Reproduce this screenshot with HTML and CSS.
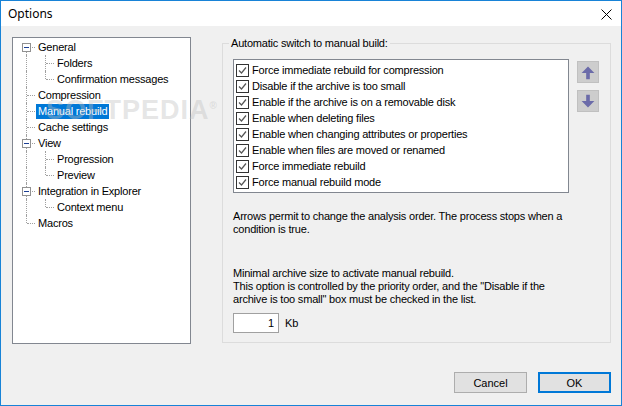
FILE: index.html
```html
<!DOCTYPE html>
<html lang="en">
<head>
    <meta charset="UTF-8">
    <title>Options</title>
    <link rel="stylesheet" href="styles.css">
</head>
<body>
    <div class="window">
        <div class="titlebar">
            <span class="title">Options</span>
            <svg class="close" width="11" height="11" viewBox="0 0 11 11">
                <path d="M0.5 0.5 L10.5 10.5 M10.5 0.5 L0.5 10.5" stroke="#000" stroke-width="1"/>
            </svg>
        </div>
        <div class="client">
            <div class="main">
                <div class="tree">
                    <div class="row"><span class="cell first"><span class="toggle"></span></span><span class="label">General</span></div>
                    <div class="row"><span class="cell pipe"></span><span class="cell tee"></span><span class="label">Folders</span></div>
                    <div class="row"><span class="cell pipe"></span><span class="cell end"></span><span class="label">Confirmation messages</span></div>
                    <div class="row"><span class="cell tee"></span><span class="label">Compression</span></div>
                    <div class="row"><span class="cell tee"></span><span class="label selected">Manual rebuild</span></div>
                    <div class="row"><span class="cell tee"></span><span class="label">Cache settings</span></div>
                    <div class="row"><span class="cell tee"><span class="toggle"></span></span><span class="label">View</span></div>
                    <div class="row"><span class="cell pipe"></span><span class="cell tee"></span><span class="label">Progression</span></div>
                    <div class="row"><span class="cell pipe"></span><span class="cell end"></span><span class="label">Preview</span></div>
                    <div class="row"><span class="cell tee"><span class="toggle"></span></span><span class="label">Integration in Explorer</span></div>
                    <div class="row"><span class="cell pipe"></span><span class="cell end"></span><span class="label">Context menu</span></div>
                    <div class="row"><span class="cell end"></span><span class="label">Macros</span></div>
                </div>

                <fieldset class="group">
                    <legend>Automatic switch to manual build:</legend>
                    <div class="group-body">
                        <div class="list-area">
                            <div class="checklist">
                                <div class="check-row"><span class="box"><svg width="11" height="11" viewBox="0 0 11 11"><path d="M2 5.5 L4.5 8 L9 2.5" fill="none" stroke="#555" stroke-width="1.2"/></svg></span>Force immediate rebuild for compression</div>
                                <div class="check-row"><span class="box"><svg width="11" height="11" viewBox="0 0 11 11"><path d="M2 5.5 L4.5 8 L9 2.5" fill="none" stroke="#555" stroke-width="1.2"/></svg></span>Disable if the archive is too small</div>
                                <div class="check-row"><span class="box"><svg width="11" height="11" viewBox="0 0 11 11"><path d="M2 5.5 L4.5 8 L9 2.5" fill="none" stroke="#555" stroke-width="1.2"/></svg></span>Enable if the archive is on a removable disk</div>
                                <div class="check-row"><span class="box"><svg width="11" height="11" viewBox="0 0 11 11"><path d="M2 5.5 L4.5 8 L9 2.5" fill="none" stroke="#555" stroke-width="1.2"/></svg></span>Enable when deleting files</div>
                                <div class="check-row"><span class="box"><svg width="11" height="11" viewBox="0 0 11 11"><path d="M2 5.5 L4.5 8 L9 2.5" fill="none" stroke="#555" stroke-width="1.2"/></svg></span>Enable when changing attributes or properties</div>
                                <div class="check-row"><span class="box"><svg width="11" height="11" viewBox="0 0 11 11"><path d="M2 5.5 L4.5 8 L9 2.5" fill="none" stroke="#555" stroke-width="1.2"/></svg></span>Enable when files are moved or renamed</div>
                                <div class="check-row"><span class="box"><svg width="11" height="11" viewBox="0 0 11 11"><path d="M2 5.5 L4.5 8 L9 2.5" fill="none" stroke="#555" stroke-width="1.2"/></svg></span>Force immediate rebuild</div>
                                <div class="check-row"><span class="box"><svg width="11" height="11" viewBox="0 0 11 11"><path d="M2 5.5 L4.5 8 L9 2.5" fill="none" stroke="#555" stroke-width="1.2"/></svg></span>Force manual rebuild mode</div>
                            </div>
                            <div class="order-buttons">
                                <button class="arrow-btn"><svg width="22" height="21" viewBox="0 0 22 21"><polygon points="11,4 18,11 13,11 13,18 9,18 9,11 4,11" fill="#6b6ba9"/></svg></button>
                                <button class="arrow-btn"><svg width="22" height="21" viewBox="0 0 22 21"><polygon points="11,17 18,10 13,10 13,3 9,3 9,10 4,10" fill="#6b6ba9"/></svg></button>
                            </div>
                        </div>
                        <p class="note">Arrows permit to change the analysis order. The process stops when a condition is true.</p>
                        <p class="note second">Minimal archive size to activate manual rebuild.<br>This option is controlled by the priority order, and the "Disable if the archive is too small" box must be checked in the list.</p>
                        <div class="size-row">
                            <input class="size-input" type="text" value="1">
                            <span>Kb</span>
                        </div>
                    </div>
                </fieldset>

                <span class="watermark">SOFTPEDIA<sup>®</sup></span>
            </div>
            <div class="footer">
                <button class="btn">Cancel</button>
                <button class="btn default">OK</button>
            </div>
        </div>
    </div>
</body>
</html>
```

FILE: styles.css
```css
body {
    margin: 0;
    font-family: "Liberation Sans", Arial, sans-serif;
    font-size: 11px;
    letter-spacing: -0.2px;
    color: #000;
}
.window {
    width: 622px;
    height: 406px;
    box-sizing: border-box;
    border: 1px solid #1883d7;
    display: flex;
    flex-direction: column;
    background-color: #f0f0f0;
}
.titlebar {
    height: 25px;
    background-color: #fff;
    display: flex;
    align-items: center;
    justify-content: space-between;
    padding: 0 9px 0 7px;
}
.title {
    font-family: "Noto Sans", "Open Sans", sans-serif;
    font-size: 12px;
    letter-spacing: 0;
}
.close {
    margin-top: 2px;
}
.client {
    flex: 1;
    padding: 11px 10px 0 11px;
    display: flex;
    flex-direction: column;
}
.main {
    display: flex;
    gap: 31px;
    position: relative;
}

/* tree view */
.tree {
    width: 179px;
    height: 307px;
    box-sizing: border-box;
    border: 1px solid #828790;
    background-color: #fff;
    padding: 1px 0 0 4px;
}
.row {
    display: flex;
    height: 16px;
    align-items: center;
}
.cell {
    width: 19px;
    height: 16px;
    flex: none;
    position: relative;
}
.cell::before {
    content: '';
    position: absolute;
    left: 9px;
    top: 0;
    bottom: 0;
    border-left: 1px dotted #a0a0a0;
}
.cell.first::before {
    top: 8px;
}
.cell.end::before {
    bottom: 8px;
}
.cell.tee::after,
.cell.end::after,
.cell.first::after {
    content: '';
    position: absolute;
    left: 10px;
    top: 8px;
    width: 8px;
    border-top: 1px dotted #a0a0a0;
}
.toggle {
    position: absolute;
    left: 5px;
    top: 4px;
    width: 9px;
    height: 9px;
    box-sizing: border-box;
    border: 1px solid #919191;
    background-color: #fff;
    z-index: 1;
}
.toggle::after {
    content: '';
    position: absolute;
    left: 1px;
    top: 3px;
    width: 5px;
    border-top: 1px solid #1c3f94;
}
.label {
    padding: 0 2px;
    line-height: 15px;
    white-space: nowrap;
}
.label.selected {
    background-color: #0078d7;
    color: #fff;
}

/* group box */
.group {
    width: 389px;
    height: 306px;
    box-sizing: border-box;
    margin: 0;
    padding: 0;
    min-width: 0;
    border: 1px solid #dcdcdc;
}
.group legend {
    margin-left: 6px;
    padding: 0 2px;
    line-height: 13px;
}
.group-body {
    padding: 9px 0 0 10px;
}
.list-area {
    display: flex;
    gap: 8px;
}
.checklist {
    width: 336px;
    height: 134px;
    box-sizing: border-box;
    border: 1px solid #828790;
    background-color: #fff;
    padding: 2px 0 0 2px;
}
.check-row {
    display: flex;
    align-items: center;
    height: 16px;
    white-space: nowrap;
}
.box {
    width: 13px;
    height: 13px;
    box-sizing: border-box;
    border: 1px solid #333;
    background-color: #fff;
    margin-right: 3px;
    flex: none;
}
.box svg {
    display: block;
}
.order-buttons {
    display: flex;
    flex-direction: column;
    gap: 7px;
    padding-top: 2px;
}
.arrow-btn {
    width: 22px;
    height: 22px;
    padding: 0;
    border: 1px solid #c0c0c0;
    background-color: #cdcdcd;
    display: flex;
    align-items: center;
    justify-content: center;
}
.arrow-btn svg {
    display: block;
}
.note {
    margin: 17px 0 0 0;
    line-height: 13px;
    width: 350px;
}
.note.second {
    margin-top: 31px;
    width: 322px;
}
.size-row {
    display: flex;
    align-items: center;
    gap: 6px;
    margin-top: 7px;
}
.size-input {
    width: 46px;
    height: 20px;
    box-sizing: border-box;
    border: 1px solid #a0a0a0;
    font-family: inherit;
    font-size: 11px;
    text-align: right;
    padding: 0 4px;
}

.watermark {
    position: absolute;
    left: 34px;
    top: 58px;
    font-size: 27px;
    font-weight: bold;
    letter-spacing: 1px;
    color: rgba(190, 190, 190, 0.4);
    pointer-events: none;
}
.watermark sup {
    font-size: 10px;
}

/* dialog buttons */
.footer {
    display: flex;
    justify-content: flex-end;
    gap: 11px;
    margin-top: 28px;
}
.btn {
    width: 73px;
    height: 21px;
    box-sizing: border-box;
    border: 1px solid #adadad;
    background-color: #e1e1e1;
    font-family: inherit;
    font-size: 11px;
    padding: 0;
}
.btn.default {
    border: 2px solid #0078d7;
}
```
